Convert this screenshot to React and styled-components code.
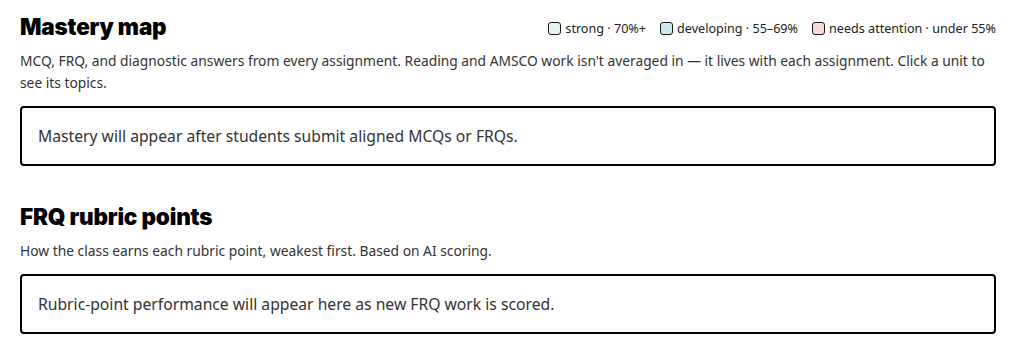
import React from "react";
import styled, { createGlobalStyle } from "styled-components";

const Global = createGlobalStyle`
  html, body { margin: 0; padding: 0; background: #fff; }
  body { font-family: "Noto Sans", "Open Sans", sans-serif; color: #1a1a1a; }
`;

const Page = styled.div`
  padding: 12px 20px 0 20px;
  display: flex;
  flex-direction: column;
  gap: 36px;
`;

const Section = styled.section`
  display: flex;
  flex-direction: column;
`;

const HeaderRow = styled.div`
  display: flex;
  align-items: center;
  justify-content: space-between;
`;

const Title = styled.h2`
  margin: 0;
  font-family: "Inter", "Lato", sans-serif;
  font-weight: 900;
  font-size: 22.5px;
  line-height: 30px;
  color: #000;
  letter-spacing: -0.2px;
`;

const Legend = styled.div`
  display: flex;
  align-items: center;
  gap: 14px;
  font-size: 12.6px;
  color: #222;
  padding-top: 2px;
`;

const LegendItem = styled.span`
  display: inline-flex;
  align-items: center;
  gap: 4px;
`;

const Swatch = styled.span`
  width: 11px;
  height: 11px;
  border: 1.5px solid #1a1a1a;
  border-radius: 3px;
  background: ${(p) => p.$color};
  box-sizing: content-box;
`;

const Desc = styled.p`
  margin: 8px 0 0 0;
  font-size: 13.8px;
  line-height: 22px;
  color: #333;
`;

const EmptyBox = styled.div`
  margin-top: 12px;
  border: 2px solid #000;
  border-radius: 4px;
  padding: 0 16px;
  box-sizing: border-box;
  height: 60px;
  display: flex;
  align-items: center;
  font-size: 15.7px;
  color: #333;
`;

export default function App() {
  return (
    <>
      <Global />
      <Page>
        <Section>
          <HeaderRow>
            <Title>Mastery map</Title>
            <Legend>
              <LegendItem>
                <Swatch $color="#e8f4f1" />
                strong · 70%+
              </LegendItem>
              <LegendItem>
                <Swatch $color="#cde8ec" />
                developing · 55–69%
              </LegendItem>
              <LegendItem>
                <Swatch $color="#f9d9dc" />
                needs attention · under 55%
              </LegendItem>
            </Legend>
          </HeaderRow>
          <Desc>
            MCQ, FRQ, and diagnostic answers from every assignment. Reading and AMSCO work isn't averaged in — it lives with each assignment. Click a unit to see its topics.
          </Desc>
          <EmptyBox>Mastery will appear after students submit aligned MCQs or FRQs.</EmptyBox>
        </Section>
        <Section>
          <Title>FRQ rubric points</Title>
          <Desc>How the class earns each rubric point, weakest first. Based on AI scoring.</Desc>
          <EmptyBox>Rubric-point performance will appear here as new FRQ work is scored.</EmptyBox>
        </Section>
      </Page>
    </>
  );
}
